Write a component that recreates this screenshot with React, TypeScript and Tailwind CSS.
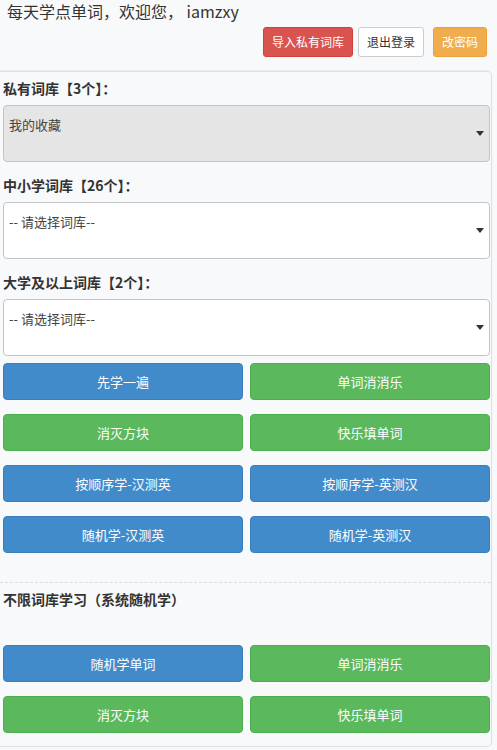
const font = "font-['Noto_Sans_CJK_SC','Noto_Sans',sans-serif]";

type Btn = { label: string; color: "blue" | "green" };

const colorClass: Record<Btn["color"], string> = {
    blue: "bg-[#428bca] border-[#3a7fbd]",
    green: "bg-[#5cb85c] border-[#4cae4c]",
};

const Caret = () => (
    <svg width="8" height="5" viewBox="0 0 8 5" className="self-center shrink-0 mr-[5px]">
        <path d="M0 0 L8 0 L4 5 Z" fill="#333" />
    </svg>
);

const Picker = ({ value, disabled }: { value: string; disabled?: boolean }) => (
    <div
        className={`flex justify-between h-[57px] rounded-[4px] border border-[#c4c4c4] ${
            disabled ? "bg-[#e5e5e5]" : "bg-white"
        }`}
    >
        <span className="pl-[5px] pt-[10px] text-[13px] leading-[18px] text-[#444]">{value}</span>
        <Caret />
    </div>
);

const Section = ({ title, value, disabled }: { title: string; value: string; disabled?: boolean }) => (
    <div className="mb-[13px]">
        <h3 className="text-[14px] leading-[20px] font-bold text-[#333] mb-[7px]">{title}</h3>
        <Picker value={value} disabled={disabled} />
    </div>
);

const ButtonGrid = ({ items }: { items: Btn[] }) => (
    <div className="grid grid-cols-2 gap-x-[7px] gap-y-[14px]">
        {items.map((b, i) => (
            <button
                key={i}
                className={`h-[37px] rounded-[4px] border text-white text-[13px] ${colorClass[b.color]}`}
            >
                {b.label}
            </button>
        ))}
    </div>
);

export default function App() {
    return (
        <div className={`min-h-[750px] w-full bg-[#f8f9fa] ${font}`}>
            {/* Header */}
            <div className="pl-[7px] pr-[10px]">
                <p className="text-[16px] leading-[22px] text-[#333]">每天学点单词，欢迎您， iamzxy</p>
                <div className="flex justify-end items-center mt-[5px] gap-[5px]">
                    <button className="h-[30px] px-[8px] rounded-[3px] border border-[#d43f3a] bg-[#d9534f] text-white text-[12px]">
                        导入私有词库
                    </button>
                    <button className="h-[30px] px-[8px] rounded-[3px] border border-[#ccc] bg-white text-[#333] text-[12px]">
                        退出登录
                    </button>
                    <button className="ml-[4px] h-[30px] px-[8px] rounded-[3px] border border-[#eea236] bg-[#f0ad4e] text-white text-[12px]">
                        改密码
                    </button>
                </div>
            </div>

            {/* Panel */}
            <div className="mt-[14px] w-[492px] border-t border-r border-b border-[#e0e0e0] rounded-tr-[5px] rounded-br-[5px] shadow-[0_-1px_2px_rgba(0,0,0,0.06)] pt-[6px] pb-[13px]">
                <div className="pl-[3px] pr-px">
                    <Section title="私有词库【3个】：" value="我的收藏" disabled />
                    <Section title="中小学词库【26个】：" value="-- 请选择词库--" />
                    <div className="mb-[7px]">
                        <h3 className="text-[14px] leading-[20px] font-bold text-[#333] mb-[7px]">大学及以上词库【2个】：</h3>
                        <Picker value="-- 请选择词库--" />
                    </div>
                    <ButtonGrid
                        items={[
                            { label: "先学一遍", color: "blue" },
                            { label: "单词消消乐", color: "green" },
                            { label: "消灭方块", color: "green" },
                            { label: "快乐填单词", color: "green" },
                            { label: "按顺序学-汉测英", color: "blue" },
                            { label: "按顺序学-英测汉", color: "blue" },
                            { label: "随机学-汉测英", color: "blue" },
                            { label: "随机学-英测汉", color: "blue" },
                        ]}
                    />
                </div>

                <div className="mt-[29px] border-t border-dashed border-[#dcdcdc]" />

                <div className="pl-[3px] pr-px">
                    <h3 className="mt-[6px] text-[14px] leading-[20px] font-bold text-[#333]">不限词库学习（系统随机学）</h3>
                    <div className="mt-[36px]">
                        <ButtonGrid
                            items={[
                                { label: "随机学单词", color: "blue" },
                                { label: "单词消消乐", color: "green" },
                                { label: "消灭方块", color: "green" },
                                { label: "快乐填单词", color: "green" },
                            ]}
                        />
                    </div>
                </div>
            </div>
        </div>
    );
}
